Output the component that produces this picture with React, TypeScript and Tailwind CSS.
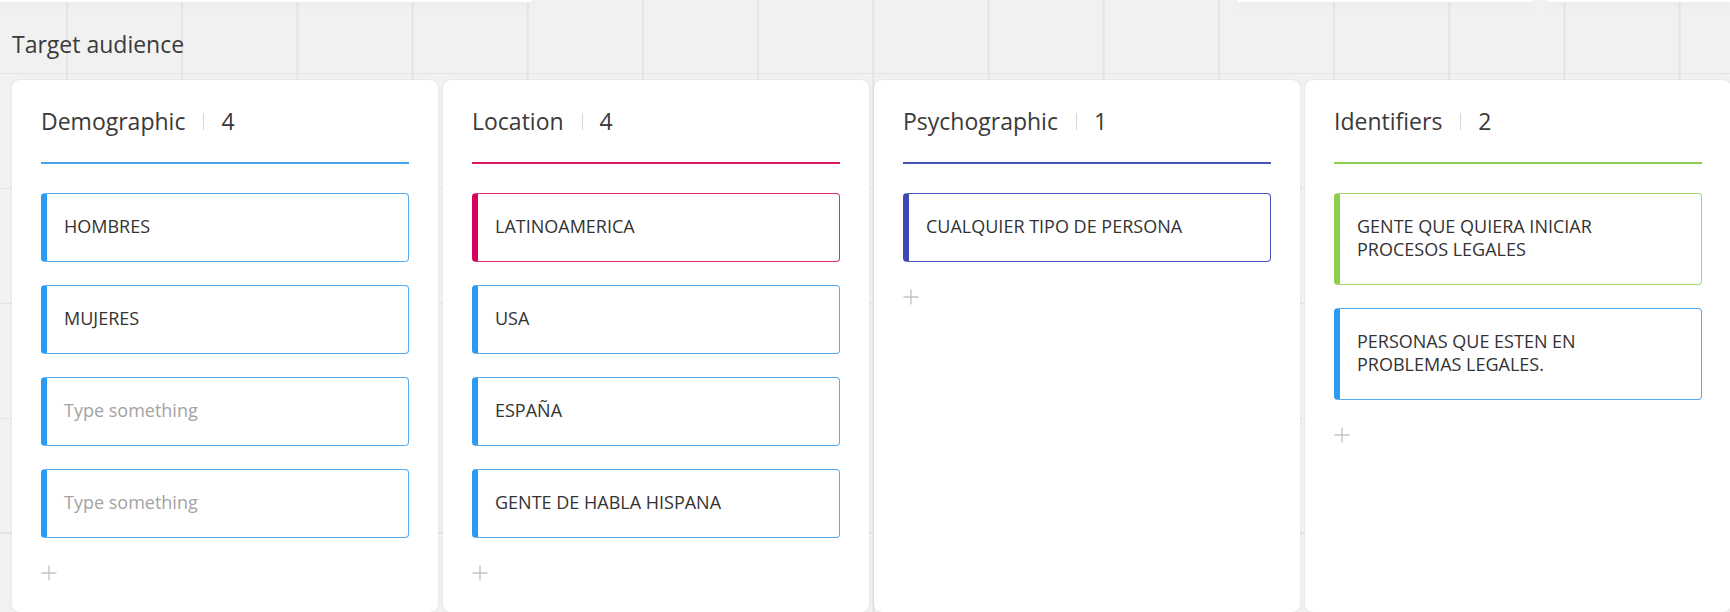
import { Plus } from 'lucide-react';

interface Item {
  text: string;
  placeholder?: boolean;
  bar: string;
  border: string;
}

interface Column {
  title: string;
  count: number;
  line: string;
  items: Item[];
}

const blue = { bar: 'border-l-[#2b9af0]', border: 'border-[#58abf0]' };
const pink = { bar: 'border-l-[#d8005f]', border: 'border-[#e22b72]' };
const indigo = { bar: 'border-l-[#3e4ab1]', border: 'border-[#4854bb]' };
const green = { bar: 'border-l-[#8bcf4a]', border: 'border-[#a2d971]' };

const columns: Column[] = [
  {
    title: 'Demographic',
    count: 4,
    line: 'bg-[#45a3ec]',
    items: [
      { text: 'HOMBRES', ...blue },
      { text: 'MUJERES', ...blue },
      { text: 'Type something', placeholder: true, ...blue },
      { text: 'Type something', placeholder: true, ...blue },
    ],
  },
  {
    title: 'Location',
    count: 4,
    line: 'bg-[#dc1766]',
    items: [
      { text: 'LATINOAMERICA', ...pink },
      { text: 'USA', ...blue },
      { text: 'ESPAÑA', ...blue },
      { text: 'GENTE DE HABLA HISPANA', ...blue },
    ],
  },
  {
    title: 'Psychographic',
    count: 1,
    line: 'bg-[#4953b6]',
    items: [{ text: 'CUALQUIER TIPO DE PERSONA', ...indigo }],
  },
  {
    title: 'Identifiers',
    count: 2,
    line: 'bg-[#8ccd4e]',
    items: [
      { text: 'GENTE QUE QUIERA INICIAR PROCESOS LEGALES', ...green },
      { text: 'PERSONAS QUE ESTEN EN PROBLEMAS LEGALES.', ...blue },
    ],
  },
];

function Sticker({ item }: { item: Item }) {
  return (
    <div
      className={`rounded border border-l-[6px] bg-white pl-[17px] pr-[60px] pt-[21px] pb-[23px] text-[18px] leading-[23px] ${item.border} ${item.bar} ${
        item.placeholder ? 'text-[#a3a3a3]' : 'text-[#333333]'
      }`}
    >
      {item.text}
    </div>
  );
}

function AudienceColumn({ col }: { col: Column }) {
  return (
    <div className="w-[426px] shrink-0 rounded-lg bg-white px-[29px] pt-[26px] shadow-[0_0_2px_rgba(0,0,0,0.1)]">
      {/* Header */}
      <div className="flex items-center text-[23px] leading-[30px] text-[#3a3a3a]">
        <span>{col.title}</span>
        <span className="ml-[18px] mr-[17px] h-[17px] w-px bg-[#d6d6d6]" />
        <span>{col.count}</span>
      </div>
      <div className={`mt-[26px] h-[2px] ${col.line}`} />

      {/* Items */}
      <div className="mt-[29px] flex flex-col gap-[23px]">
        {col.items.map((item, i) => (
          <Sticker key={i} item={item} />
        ))}
      </div>

      <div className="-ml-[4px] mt-[23px] text-[#c4c4c4]">
        <Plus className="h-6 w-6" strokeWidth={1.4} />
      </div>
    </div>
  );
}

export default function App() {
  return (
    <div className="flex h-[612px] w-[1730px] flex-col overflow-hidden bg-[#f1f1f1] bg-[linear-gradient(to_right,#e4e4e4_2px,transparent_2px),linear-gradient(to_bottom,#e4e4e4_2px,transparent_2px)] bg-[size:115.2px_115px] bg-[position:66px_72px] font-['Open_Sans',sans-serif]">
      {/* Cards of the board above, cut off */}
      <div className="flex h-[2px] shrink-0">
        <div className="w-[532px] rounded-br-md bg-white shadow-[0_2px_8px_rgba(0,0,0,0.08)]" />
        <div className="ml-[705px] w-[296px] rounded-b-md bg-white shadow-[0_2px_8px_rgba(0,0,0,0.08)]" />
        <div className="ml-[14px] flex-1 rounded-bl-md bg-white shadow-[0_2px_8px_rgba(0,0,0,0.08)]" />
      </div>

      <div className="ml-[12px] mt-[27px] text-[23px] leading-[30px] text-[#3a3a3a]">Target audience</div>

      <div className="ml-[12px] mt-[21px] flex flex-1 gap-[5px]">
        {columns.map((col) => (
          <AudienceColumn key={col.title} col={col} />
        ))}
      </div>
    </div>
  );
}
